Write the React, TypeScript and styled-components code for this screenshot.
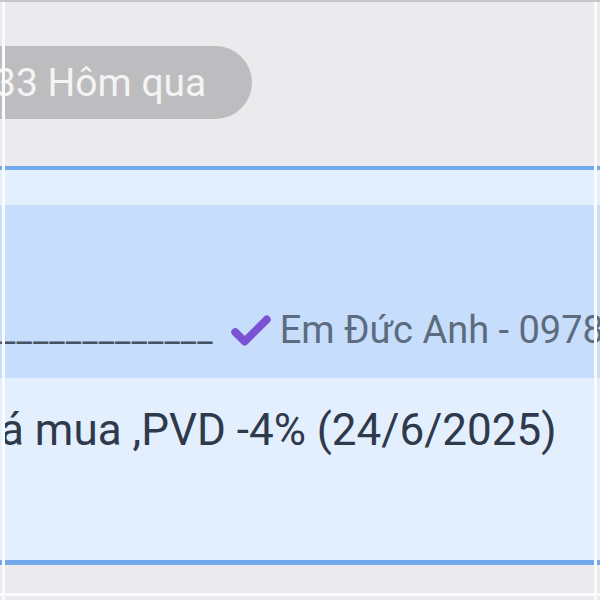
import styled, { createGlobalStyle } from "styled-components"

const GlobalStyle = createGlobalStyle`
    html, body {
        margin: 0;
        padding: 0;
        background: #ebebed;
        font-family: Roboto, "Noto Sans", Arial, sans-serif;
    }
`

const CheckIcon = () => (
    <CheckSvg viewBox="0 0 40 32" aria-hidden>
        <path d="M5 18 L14 27 L35 6" fill="none" stroke="#7a52d3" strokeWidth="7.5" strokeLinecap="round" strokeLinejoin="round" />
    </CheckSvg>
)

const App = () => {
    return (
        <Screen>
            <GlobalStyle />
            <DateRow>
                <DatePill>33 Hôm qua</DatePill>
            </DateRow>
            <Card>
                <Quote>
                    <Signature>
                        <Rule>_____________</Rule>
                        <CheckIcon />
                        <Author>Em Đức Anh - 0978</Author>
                    </Signature>
                </Quote>
                <Message>á mua ,PVD -4% (24/6/2025)</Message>
            </Card>
            <Footer />
        </Screen>
    )
}

export default App

const Screen = styled.div`
    position: relative;
    width: 600px;
    height: 600px;
    overflow: hidden;
    box-sizing: border-box;
    border-top: 2px solid #c7c7cb;
    background: #ebebed;

    &:before, &:after {
        content: "";
        position: absolute;
        top: 0;
        bottom: 0;
        width: 3px;
        background: #fafbfd;
        z-index: 1;
    }
    &:before { left: 2px; }
    &:after { left: 594px; }
`

const DateRow = styled.div`
    display: flex;
    padding-top: 44px;
    height: 120px;
    box-sizing: border-box;
`

const DatePill = styled.div`
    display: flex;
    align-items: center;
    height: 73px;
    margin-left: -40px;
    padding: 0 46px 0 34px;
    border-radius: 37px;
    background: #bdbdbf;
    color: #f4f4f4;
    font-size: 39px;
    white-space: nowrap;
`

const Card = styled.div`
    margin: 44px -20px 0 -20px;
    padding-top: 35px;
    height: 399px;
    box-sizing: border-box;
    background: #e3effd;
    border-top: 4px solid #72a9ef;
    border-bottom: 5px solid #72a9ef;
`

const Quote = styled.div`
    display: flex;
    align-items: flex-end;
    height: 173px;
    box-sizing: border-box;
    padding: 0 0 26px 20px;
    background: #c6defb;
`

const Signature = styled.div`
    display: flex;
    align-items: center;
    gap: 12px;
    white-space: nowrap;
    font-size: 38px;
`

const Rule = styled.span`
    color: #465163;
    letter-spacing: 1.1px;
    font-size: 34px;
    margin-right: 4px;
`

const CheckSvg = styled.svg`
    width: 42px;
    height: 34px;
    flex: none;
`

const Author = styled.span`
    margin-left: -4px;
    color: #5d6b7e;
`

const Message = styled.p`
    margin: 0;
    padding: 26px 0 0 20px;
    color: #2e394b;
    font-size: 44px;
    white-space: nowrap;
`

const Footer = styled.div`
    height: 28px;
    border-bottom: 3px solid #fafbfd;
`
